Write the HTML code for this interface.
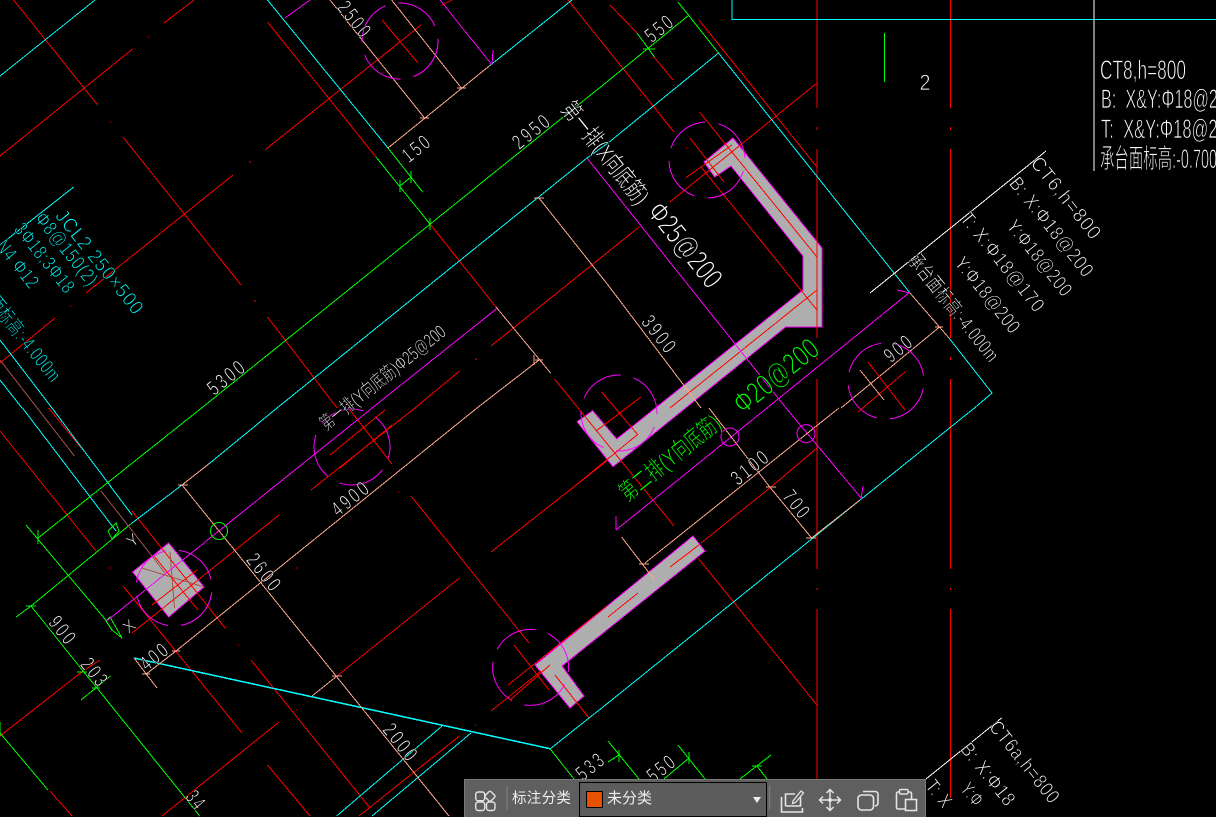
<!DOCTYPE html>
<html lang="zh"><head><meta charset="utf-8"><title>CAD</title>
<style>
html,body{margin:0;padding:0;background:#000;width:1216px;height:817px;overflow:hidden}
svg{position:absolute;left:0;top:0}
text{font-family:"Liberation Sans","Noto Sans CJK SC",sans-serif;text-anchor:middle;stroke:#000;stroke-width:.7}
.w{fill:#fff}.c{fill:#0ff}.g{fill:#0f0}
.d{font-size:21px;letter-spacing:4px}
.s{font-size:20px;letter-spacing:1px}
.t{font-size:27px;text-anchor:start;stroke-width:.8}
.st{text-anchor:start}
#bar{position:absolute;left:464px;top:779px;width:462px;height:38px;background:#5f5f5f;box-sizing:border-box;border:1px solid #7a7a7a;border-bottom:0;font-family:"Liberation Sans","Noto Sans CJK SC",sans-serif;color:#eee;overflow:hidden}
#sel{position:absolute;left:114px;top:2px;width:188px;height:35px;box-sizing:border-box;border:1px solid #000;background:#5c5c5c}
#sw{position:absolute;left:6px;top:8px;width:17px;height:17px;box-sizing:border-box;border:1px solid #000;background:#e65100}
</style></head><body>
<svg width="1216" height="817" viewBox="0 0 1216 817" fill="none" stroke-width="1" shape-rendering="crispEdges">
<rect width="1216" height="817" fill="#000"/>
<!-- walls -->
<g fill="#aeaeae" stroke="#f0f">
<path d="M704,162L733,138L822,248V327H785.6L613,466.7L577,421.7L592.7,410.7L616.7,439L803,290V256L731,166L714.6,177Z"/>
<path d="M693,536L705,551L562,666L584,696L570,708L535,665Z"/>
<path d="M168.7,543L204,587L168.7,617L132.6,572Z"/>
</g>
<!-- red -->
<path stroke="#f00" d="M13.6,0L97.7,105M0,156L132.6,49M164,23L194,0M267.5,22L376,157M430,224L496,307M265,150L421,25M382,20L418,63M123,137L241,285M86,293L233,175M0,363L55,318M267.5,317L337,408M491,346L639,227M670,202L817,83M415,408L459.5,371M554.5,379L674,526M568,0L674,132M442,5L452,0M610,5L637,33M654,57L673,80M699,20L817,167M699.5,112L817,257M690,138L724,182M701,167L817,310M685.5,178L732,145M670,408L817,290M601.7,392L638,435M641,397L596,431M637,435L570,490M701,543L771,487L817,448M698,558L817,705M670,567L699,545M608,617L638,593M48.5,408L83,450M132,511L225.6,628.6M0,431L96,551M0,736L83,671L100,660M50,791L72,816M123,586L242,733M337,676L459.5,578M132,633L279,515M311,490L415,408M411,496L529,643M491,552L608,460M491,711L541,671M508,685L608,605M514,645L549,690M555,675L589,718M251,660L370,808M162,816L279,722M267.5,765L310,816M359,816L459.5,736"/>
<path stroke="#f00" d="M817,0V108M817,127V130M817,149V338M817,357V360M817,379V569M817,588V590M817,609V779M950.5,0V108M950.5,127V130M950.5,149V338M950.5,357V360M950.5,379V569M950.5,588V590M950.5,609V798"/>
<path stroke="#f00" d="M148,37h1M110,122h1M249,162h2M255,300v2M70,306h1M475,359h2M640,95h1M686,148h1M296,568h1M238,645h1M398,492h1M475,725h1M296,710h1M110,568h1"/>
<!-- cyan -->
<path stroke="#0ff" d="M0,76L95,0M267.5,0L388,148M490.5,65L572,0M0,245L73.7,187M732,0V19.5H1216M608,143L718.5,53L910,293M949,338L992,393L974.4,408L608,703L550,749M22.5,408L116,531M0,380L22,408M0,340L52,408L132,515M132,523L182,485M210,463L277,408L587,158L608,143M336.6,816L442,726M372,816L471,733"/>
<path stroke="#0ff" stroke-width="1.5" d="M134,658L550,748.7"/>
<!-- green -->
<path stroke="#0f0" d="M38,538L201.6,408L608,81L689,15M678,2L718.5,53M637,33L654.5,57M376,157L430,224M388,148L422.6,192M400,186L411,177M400,180v12M411,171v12M430,218v12M31,606L132,523M26,525L106.6,621M16,617L31,606M31,606L83,671L97,688L199.7,816M81,700L110.5,676M0,733L48,790M0,722v14M550,748.7L574,779M608,741L639,779M608,762L619,755M678,745L705,779M664,779L689,758M740,779L771,755M757,766L767,779M884.5,33V82M38,530v14M26,606h10M77,672h10M92,688h8M619,750v12M689,752v12M752,766h10M643,49h12M112,539L119,531L116,523L108,531ZM106,621L110,617L122,638M106,621L112,630L122,638"/>
<!-- magenta -->
<path stroke="#f0f" d="M285,18L310,0M440,0L492,65M493,50L492,65M587,158L786,408L862,499M863,486L861,499M767,408L910,292M897,290L910,293M767,408L616,530M616,516V530M106.6,621L366,413L372,408L497.5,308"/>
<!-- peach -->
<path stroke="#ffa98c" d="M330,0L424.6,118M391.6,0L461.4,88M388,148L490.5,65M539,198L608,285L701,408M709,408L769,486L811.6,538L860,500M496,307L550.6,373M910,293L949,338M841,408L939.5,327M839,408L645,563M621.6,537L654.5,580M182,485L210,463M182,485L449,816M134,658L157,688M146.6,673.7L176.4,650.7L477,408L539,360M312,696L337,676M420,118h9M457,88h9M534,198h10M766,487h10M806,538h10M639,564h10M178,485h10M332,676h10M172,651h8M142,674h8M535,360h8M534,355v10M935,327h8"/>
<!-- brown -->
<path stroke="#a5524a" d="M0,360L74.4,456M100.8,490.7L155,560L165,573M142,568L204,587M170,552L174.5,608"/>
<!-- white -->
<path stroke="#fff" d="M870,293L1046,151M926,779L1001.6,718M1094,0V171"/>
<!-- dashed circles -->
<g stroke="#f0f" shape-rendering="auto" stroke-dasharray="46 13">
<circle cx="400" cy="41" r="38"/>
<circle cx="707" cy="160" r="38" transform="rotate(20 707 160)"/>
<circle cx="352" cy="447" r="38" transform="rotate(40 352 447)"/>
<circle cx="174" cy="588" r="38" transform="rotate(10 174 588)"/>
<circle cx="530.7" cy="667" r="38" transform="rotate(30 530 667)"/>
<circle cx="886" cy="381" r="38" transform="rotate(15 886 381)"/>
<circle cx="619" cy="413" r="38" transform="rotate(25 619 413)"/>
</g>
<g shape-rendering="auto">
<circle cx="219" cy="531" r="8.5" stroke="#0f0"/>
<circle cx="730" cy="437" r="9" stroke="#f0f"/>
<circle cx="806" cy="433.7" r="9" stroke="#f0f"/>
</g>
<!-- internal crosses -->
<path stroke="#f00" d="M350,410L392,464M330,455L385,410M340,468L392,425M868,362L905,410M858,412L905,372M154,556L198,610M152,605L197,570M510,700L550,665"/>
<path stroke="#ffa98c" d="M860,370L884,400"/>
<!-- dimension text -->
<g class="w" shape-rendering="auto">
<g class="d">
<text transform="translate(355,20) rotate(51.3)" textLength="42" lengthAdjust="spacingAndGlyphs" dy="7">2500</text>
<text transform="translate(417,148) rotate(-38.7)" textLength="32" lengthAdjust="spacingAndGlyphs" dy="7">150</text>
<text transform="translate(532,131) rotate(-38.7)" textLength="44" lengthAdjust="spacingAndGlyphs" dy="7">2950</text>
<text transform="translate(227,377) rotate(-38.7)" textLength="44" lengthAdjust="spacingAndGlyphs" dy="7">5300</text>
<text transform="translate(659.6,335) rotate(51.3)" textLength="44" lengthAdjust="spacingAndGlyphs" dy="7">3900</text>
<text transform="translate(351,498) rotate(-38.7)" textLength="44" lengthAdjust="spacingAndGlyphs" dy="7">4900</text>
<text transform="translate(264.5,573) rotate(51.3)" textLength="44" lengthAdjust="spacingAndGlyphs" dy="7">2600</text>
<text transform="translate(63,631) rotate(51.3)" textLength="32" lengthAdjust="spacingAndGlyphs" dy="7">900</text>
<text transform="translate(95,673) rotate(51.3)" textLength="32" lengthAdjust="spacingAndGlyphs" dy="7">203</text>
<text transform="translate(155,656) rotate(-38.7)" textLength="32" lengthAdjust="spacingAndGlyphs" dy="7">400</text>
<text transform="translate(401,743) rotate(51.3)" textLength="44" lengthAdjust="spacingAndGlyphs" dy="7">2000</text>
<text class="st" transform="translate(190,793) rotate(51.3)" textLength="20" lengthAdjust="spacingAndGlyphs" dy="7">34</text>
<text transform="translate(591,766) rotate(-38.7)" textLength="32" lengthAdjust="spacingAndGlyphs" dy="7">533</text>
<text transform="translate(662,768) rotate(-38.7)" textLength="32" lengthAdjust="spacingAndGlyphs" dy="7">550</text>
<text transform="translate(660,28) rotate(-38.7)" textLength="32" lengthAdjust="spacingAndGlyphs" dy="7">550</text>
<text transform="translate(899,348) rotate(-38.7)" textLength="32" lengthAdjust="spacingAndGlyphs" dy="7">900</text>
<text transform="translate(750.7,467) rotate(-38.7)" textLength="44" lengthAdjust="spacingAndGlyphs" dy="7">3100</text>
<text transform="translate(797,505) rotate(51.3)" textLength="32" lengthAdjust="spacingAndGlyphs" dy="7">700</text>
</g>
<text transform="translate(132.6,540) rotate(-38.7)" font-size="17" dy="6">Y</text>
<text transform="translate(129,626) rotate(-38.7)" font-size="17" dy="6">X</text>
<text x="925" y="90" font-size="22" textLength="11" lengthAdjust="spacingAndGlyphs">2</text>
<text transform="translate(605,153) rotate(51.3)" font-size="24" textLength="124" lengthAdjust="spacingAndGlyphs" dy="8">第一排(X向底筋)</text>
<text transform="translate(685,245) rotate(51.3)" font-size="30" textLength="100" lengthAdjust="spacingAndGlyphs" dy="10" style="stroke-width:1">Φ25@200</text>
<text transform="translate(383,378) rotate(-38.7)" font-size="19" textLength="155" lengthAdjust="spacingAndGlyphs" dy="6">第一排(Y向底筋)Φ25@200</text>
<!-- top right -->
<text class="t" x="1100" y="79" textLength="86" lengthAdjust="spacingAndGlyphs">CT8,h=800</text>
<text class="t" x="1101" y="108" textLength="135" lengthAdjust="spacingAndGlyphs">B:&#160;&#160;X&amp;Y:Φ18@200</text>
<text class="t" x="1101" y="138" textLength="135" lengthAdjust="spacingAndGlyphs">T:&#160;&#160;X&amp;Y:Φ18@200</text>
<text class="t" x="1100" y="168" textLength="117" lengthAdjust="spacingAndGlyphs">承台面标高:-0.700</text>
<!-- CT6 block -->
<g class="s">
<text transform="translate(1066.5,198) rotate(51.3)" textLength="100" lengthAdjust="spacingAndGlyphs" dy="7">CT6,h=800</text>
<text transform="translate(1052,227) rotate(51.3)" textLength="122" lengthAdjust="spacingAndGlyphs" dy="7">B: X:Φ18@200</text>
<text transform="translate(1040,258) rotate(51.3)" textLength="92" lengthAdjust="spacingAndGlyphs" dy="7">Y:Φ18@200</text>
<text transform="translate(1003,262) rotate(51.3)" textLength="122" lengthAdjust="spacingAndGlyphs" dy="7">T: X:Φ18@170</text>
<text transform="translate(988,295) rotate(51.3)" textLength="92" lengthAdjust="spacingAndGlyphs" dy="7">Y:Φ18@200</text>
<text transform="translate(954,308) rotate(51.3)" textLength="132" lengthAdjust="spacingAndGlyphs" dy="7">承台面标高:-4.000m</text>
<text transform="translate(1025,762) rotate(51.3)" textLength="100" lengthAdjust="spacingAndGlyphs" dy="7">CT6a,h=800</text>
<text class="st" transform="translate(965,745) rotate(51.3)" textLength="75" lengthAdjust="spacingAndGlyphs" dy="7">B: X:Φ18</text>
<text class="st" transform="translate(965,785) rotate(51.3)" textLength="24" lengthAdjust="spacingAndGlyphs" dy="7">Y:Φ</text>
<text class="st" transform="translate(930,782) rotate(51.3)" textLength="30" lengthAdjust="spacingAndGlyphs" dy="7">T: X</text>
</g>
</g>
<!-- green label -->
<g class="g" shape-rendering="auto">
<text transform="translate(670,458) rotate(-38.7)" font-size="24" textLength="122" lengthAdjust="spacingAndGlyphs" dy="8">第二排(Y向底筋)</text>
<text transform="translate(776,376) rotate(-38.7)" font-size="30" textLength="100" lengthAdjust="spacingAndGlyphs" dy="10" style="stroke-width:1">Φ20@200</text>
</g>
<!-- cyan labels -->
<g class="c s" shape-rendering="auto">
<text transform="translate(100,262) rotate(51.3)" textLength="128" lengthAdjust="spacingAndGlyphs" dy="7">JCL2 250×500</text>
<text transform="translate(67,249) rotate(51.3)" textLength="88" lengthAdjust="spacingAndGlyphs" dy="7">Φ8@150(2)</text>
<text transform="translate(45,258) rotate(51.3)" textLength="84" lengthAdjust="spacingAndGlyphs" dy="7">3Φ18;3Φ18</text>
<text transform="translate(18,264) rotate(51.3)" textLength="56" lengthAdjust="spacingAndGlyphs" dy="7">N4 Φ12</text>
<text transform="translate(16,328) rotate(51.3)" textLength="132" lengthAdjust="spacingAndGlyphs" dy="7">承台面标高:-4.000m</text>
</g>
</svg>
<div id="bar">
<svg width="460" height="37" viewBox="465 780 460 37" fill="none" stroke="#e4e4e4" stroke-width="1.4" style="left:0;top:0">
<rect x="475.7" y="792" width="9" height="8.7" rx="2.5"/>
<rect x="486" y="792.3" width="8" height="8" rx="1.5" transform="rotate(45 490 796.3)"/>
<rect x="475.7" y="802" width="9" height="8.5" rx="2.5"/>
<rect x="486.5" y="802" width="8.5" height="8.5" rx="2.5"/>
<path d="M507,786V810" stroke="#7b7b7b"/>
<path d="M769.5,786V810" stroke="#7b7b7b"/>
<path d="M785.5,806V794H795M800.5,797V806H785.5" stroke-width="1.6"/>
<path d="M781.5,797V812H802.5V808" stroke-width="1.6"/>
<path d="M793,801L801,791L803.5,793L795.5,802.5L792.5,803.5Z" stroke-width="1.3"/>
<path d="M830,790V810M820,800H840M826.5,793L830,789.5L833.5,793M826.5,807L830,810.5L833.5,807M823,796.5L819.5,800L823,803.5M837,796.5L840.5,800L837,803.5" stroke-width="1.5"/>
<circle cx="830" cy="800" r="2" fill="#e4e4e4" stroke="none"/>
<rect x="858" y="795" width="15.5" height="15" rx="3.5" stroke-width="1.6"/>
<path d="M863,791.5H875Q878,791.5 878,794.5V803Q878,805.5 875,806" stroke-width="1.6"/>
<rect x="896.5" y="792" width="15" height="17" rx="1.5" stroke-width="1.6"/>
<rect x="899.5" y="789.5" width="8.5" height="4.5" rx="1.2" fill="#5f5f5f" stroke-width="1.4"/>
<rect x="905.5" y="799.5" width="11" height="11" fill="#5f5f5f" stroke-width="1.6"/>
</svg>
<div style="position:absolute;left:47px;top:10px;font-size:14.5px;line-height:18px;letter-spacing:.3px;white-space:nowrap">标注分类</div>
<div id="sel"><div id="sw"></div>
<div style="position:absolute;left:27px;top:7px;font-size:15px;line-height:18px;white-space:nowrap">未分类</div>
<div style="position:absolute;left:173px;top:14px;width:0;height:0;border-left:4.5px solid transparent;border-right:4.5px solid transparent;border-top:6px solid #eee"></div>
</div>
</div>
</body></html>
